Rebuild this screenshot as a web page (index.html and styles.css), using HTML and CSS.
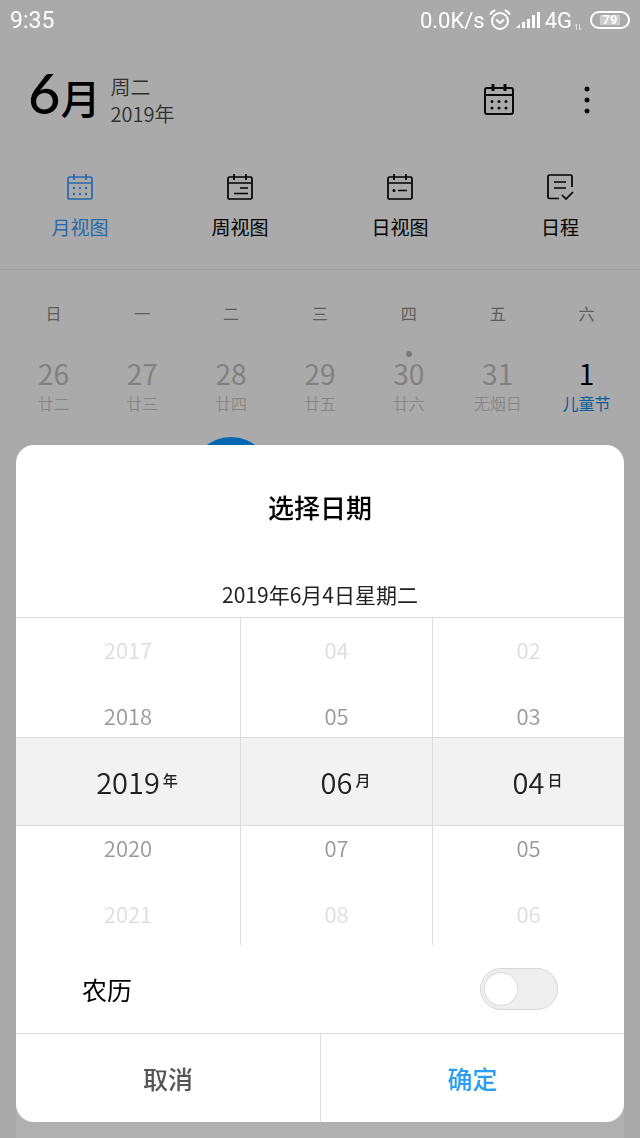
FILE: index.html
```html
<!DOCTYPE html>
<html lang="zh-CN">
<head>
  <meta charset="UTF-8">
  <meta name="viewport" content="width=device-width, initial-scale=1.0">
  <title>日历</title>
  <link rel="stylesheet" href="styles.css">
</head>
<body>
  <div class="status-bar">
    <span class="clock">9:35</span>
    <div class="status-right">
      <span>0.0K/s</span>
      <svg class="alarm" width="22" height="22" viewBox="0 0 22 22" fill="none" stroke="#fff" stroke-width="2" stroke-linecap="round">
        <circle cx="11" cy="12" r="8"/>
        <path d="M7.5 11l3.5 3 3.5-3M1.5 5Q3 2.500 5.500 1.500M20.500 5Q19 2.500 16.500 1.500"/>
      </svg>
      <svg class="signal" width="26" height="18" viewBox="0 0 26 18" fill="#fff">
        <path d="M1 17l4-4v4zM7 11h3v6H7zM12 8h3v9h-3zM17 4h3v13h-3zM22 1h3v16h-3z"/>
      </svg>
      <span>4G</span>
      <svg class="data" width="8" height="8" viewBox="0 0 8 8" fill="none" stroke="#ddd">
        <path d="M2.500 7V1L.5 3M5.500 1v6l2-2"/>
      </svg>
      <span class="battery"><span class="level">79</span></span>
    </div>
  </div>

  <div class="app">
    <header>
      <h1><span class="month-number">6</span>月</h1>
      <div class="sub-date">
        <span>周二</span>
        <span>2019年</span>
      </div>
      <button class="icon-button" aria-label="今天">
        <svg width="32" height="34" viewBox="0 0 32 34" fill="none" stroke="currentColor" stroke-width="2">
          <rect x="2" y="5" width="28" height="26" rx="2"/>
          <path d="M2 12h28"/>
          <path d="M10 1v7M22 1v7" stroke-width="3"/>
          <path d="M9 18.500h0M16 18.500h0M23 18.500h0M9 25h0M16 25h0M23 25h0" stroke-width="3" stroke-linecap="round"/>
        </svg>
      </button>
      <button class="icon-button" aria-label="更多">
        <svg width="32" height="34" viewBox="0 0 32 34" fill="currentColor">
          <circle cx="16" cy="6" r="2.500"/>
          <circle cx="16" cy="17" r="2.500"/>
          <circle cx="16" cy="28" r="2.500"/>
        </svg>
      </button>
    </header>

    <nav>
      <a href="#month" class="active">
        <svg width="28" height="28" viewBox="0 0 28 28" fill="none" stroke="currentColor" stroke-width="1.700">
          <rect x="2" y="4" width="24" height="22" rx="1.500"/>
          <path d="M2 10h24M8 1v6M20 1v6"/>
          <path d="M8 15h0M14 15h0M20 15h0M8 21h0M14 21h0M20 21h0" stroke-width="2.500" stroke-linecap="round"/>
        </svg>
        月视图
      </a>
      <a href="#week">
        <svg width="28" height="28" viewBox="0 0 28 28" fill="none" stroke="currentColor" stroke-width="1.700">
          <rect x="2" y="4" width="24" height="22" rx="1.500"/>
          <path d="M2 10h24M8 1v6M20 1v6M14 15h8M8 20.500h14"/>
        </svg>
        周视图
      </a>
      <a href="#day">
        <svg width="28" height="28" viewBox="0 0 28 28" fill="none" stroke="currentColor" stroke-width="1.700">
          <rect x="2" y="4" width="24" height="22" rx="1.500"/>
          <path d="M2 10h24M8 1v6M20 1v6M12 17.500h9"/>
          <path d="M8 17.500h0" stroke-width="3" stroke-linecap="round"/>
        </svg>
        日视图
      </a>
      <a href="#agenda">
        <svg width="28" height="28" viewBox="0 0 28 28" fill="none" stroke="currentColor" stroke-width="1.700">
          <path d="M13 25.500H3.500Q2 25.500 2 24V3.500Q2 2 3.500 2h21Q26 2 26 3.500V14M8 9h12M8 15h12M16 22l4 4 7-7"/>
        </svg>
        日程
      </a>
    </nav>

    <table class="calendar">
      <thead>
        <tr><th>日</th><th>一</th><th>二</th><th>三</th><th>四</th><th>五</th><th>六</th></tr>
      </thead>
      <tbody>
        <tr>
          <td>26<small>廿二</small></td>
          <td>27<small>廿三</small></td>
          <td>28<small>廿四</small></td>
          <td>29<small>廿五</small></td>
          <td class="event">30<small>廿六</small></td>
          <td>31<small>无烟日</small></td>
          <td class="current">1<small>儿童节</small></td>
        </tr>
        <tr>
          <td></td>
          <td></td>
          <td><div class="today"></div></td>
          <td></td>
          <td></td>
          <td></td>
          <td></td>
        </tr>
      </tbody>
    </table>
    <div class="card"></div>
  </div>

  <div class="overlay">
    <form class="dialog" role="dialog" aria-labelledby="dialogTitle">
      <h2 id="dialogTitle">选择日期</h2>
      <p class="full-date">2019年6月4日星期二</p>

      <div class="picker">
        <ul class="wheel" role="listbox" aria-label="年">
          <li class="far" role="option">2017</li>
          <li role="option">2018</li>
          <li class="selected" role="option" aria-selected="true"><span>2019<sup>年</sup></span></li>
          <li role="option">2020</li>
          <li class="far" role="option">2021</li>
        </ul>
        <ul class="wheel" role="listbox" aria-label="月">
          <li class="far" role="option">04</li>
          <li role="option">05</li>
          <li class="selected" role="option" aria-selected="true"><span>06<sup>月</sup></span></li>
          <li role="option">07</li>
          <li class="far" role="option">08</li>
        </ul>
        <ul class="wheel" role="listbox" aria-label="日">
          <li class="far" role="option">02</li>
          <li role="option">03</li>
          <li class="selected" role="option" aria-selected="true"><span>04<sup>日</sup></span></li>
          <li role="option">05</li>
          <li class="far" role="option">06</li>
        </ul>
      </div>

      <div class="lunar">
        <label for="lunar">农历</label>
        <input type="checkbox" id="lunar" class="switch">
      </div>

      <div class="actions">
        <button type="button">取消</button>
        <button type="button" class="confirm">确定</button>
      </div>
    </form>
  </div>
</body>
</html>
```
FILE: styles.css
```css
*,
*::before {
  box-sizing: border-box;
}
body {
  margin: 0;
  font-family: "Noto Sans CJK SC", sans-serif;
  background: #f7f7f7;
  color: #000;
}
button {
  font-family: inherit;
  border: none;
  background: none;
  padding: 0;
}

/* status bar stays above the dimmed page */
.status-bar {
  position: relative;
  z-index: 3;
  display: flex;
  justify-content: space-between;
  align-items: center;
  height: 40px;
  padding: 0 10px;
  color: #fff;
  font-family: Roboto, sans-serif;
  font-size: 22px;
}
.clock {
  font-size: 23px;
}
.status-right {
  display: flex;
  align-items: center;
  gap: 4px;
}
.data {
  align-self: flex-end;
  margin: 0 4px 2px -2px;
}
.battery {
  display: flex;
  width: 40px;
  height: 18px;
  padding: 2px 8px;
  border: 2px solid #fff;
  border-radius: 9px;
}
.level {
  flex: 1;
  background: #ccc;
  font-size: 13px;
  font-weight: bold;
  line-height: 10px;
  text-align: center;
}

.app {
  display: flex;
  flex-direction: column;
  min-height: calc(100vh - 40px);
}
header {
  display: flex;
  align-items: center;
  height: 120px;
  padding: 0 37px 0 28px;
}
h1 {
  margin: 0 0 10px;
  font-size: 40px;
  font-weight: 500;
  line-height: 64px;
}
.month-number {
  font-family: Lato, sans-serif;
  font-size: 56px;
}
.sub-date {
  display: flex;
  flex-direction: column;
  margin: 0 auto 0 10px;
  color: #444;
  font-size: 20px;
  font-weight: 350;
  line-height: 27px;
}
.icon-button {
  display: flex;
  margin-left: 56px;
  color: #111;
}

nav {
  display: grid;
  grid-template-columns: repeat(4, 1fr);
  height: 110px;
  padding-top: 13px;
  border-bottom: 1px solid #e6e6e6;
}
nav a {
  display: flex;
  flex-direction: column;
  align-items: center;
  gap: 12px;
  color: #000;
  font-size: 19px;
  line-height: 28px;
  text-decoration: none;
}
nav a.active {
  color: #3a98f8;
}

.calendar {
  width: calc(100% - 18px);
  margin: 0 9px;
  table-layout: fixed;
  border-collapse: collapse;
  text-align: center;
}
.calendar th {
  height: 85px;
  padding: 0;
  color: #888;
  font-size: 16px;
  font-weight: 400;
}
.calendar td {
  position: relative;
  height: 82px;
  padding: 0;
  color: #bbb;
  font-size: 28px;
  font-weight: 400;
  line-height: 36px;
  vertical-align: top;
}
.calendar small {
  display: block;
  color: #c4c4c4;
  font-size: 16px;
  font-weight: 350;
  line-height: 24px;
}
.calendar .current {
  color: #000;
}
.calendar .current small {
  color: #0c88e0;
  font-weight: 400;
}
.event::before {
  content: "";
  position: absolute;
  top: -4px;
  left: calc(50% - 3px);
  width: 6px;
  height: 6px;
  border-radius: 50%;
  background: #b4b4b4;
}
.today {
  width: 80px;
  height: 80px;
  margin: 0 auto;
  border-radius: 50%;
  background: #0095ff;
}
.card {
  flex: 1;
  margin: 0 16px;
  background: #fff;
}

.overlay {
  position: fixed;
  inset: 0;
  z-index: 2;
  display: flex;
  align-items: flex-end;
  padding: 16px;
  background: rgba(0, 0, 0, 0.31);
}
.dialog {
  flex: 1;
  overflow: hidden;
  border-radius: 18px;
  background: #fff;
}
.dialog h2 {
  margin: 0;
  padding: 42px 0 51px;
  font-size: 26px;
  font-weight: 500;
  line-height: 40px;
  text-align: center;
}
.full-date {
  margin: 0;
  padding-bottom: 7px;
  color: #222;
  font-size: 21px;
  line-height: 32px;
  text-align: center;
}

.picker {
  position: relative;
  display: grid;
  grid-template-columns: 7fr 6fr 6fr;
  height: 328px;
  overflow: hidden;
  border-top: 1px solid #ddd;
}
/* highlighted band behind the selected row */
.picker::before {
  content: "";
  position: absolute;
  top: 119px;
  left: 0;
  right: 0;
  height: 89px;
  border: solid #ddd;
  border-width: 1px 0;
  background: #f2f2f2;
}
.wheel {
  position: relative;
  margin: -2px 0 0;
  padding: 0;
  list-style: none;
  text-align: center;
}
.wheel + .wheel {
  border-left: 1px solid #ddd;
}
.wheel li {
  height: 66px;
  color: #999;
  font-size: 22px;
  font-weight: 350;
  line-height: 66px;
}
.wheel .far {
  color: #ddd;
}
.wheel .selected {
  color: #222;
  font-size: 29px;
}
.selected span {
  position: relative;
}
.selected sup {
  position: absolute;
  top: 10px;
  left: calc(100% + 3px);
  font-size: 15px;
  font-weight: 500;
  line-height: 20px;
}

.lunar {
  display: flex;
  justify-content: space-between;
  align-items: center;
  height: 88px;
  padding: 0 66px;
  font-size: 25px;
}
.switch {
  appearance: none;
  width: 78px;
  height: 42px;
  margin: 0;
  padding: 4px;
  border: 1px solid #d8d8d8;
  border-radius: 21px;
  background: #eee;
}
.switch::before {
  content: "";
  display: block;
  width: 32px;
  height: 32px;
  border-radius: 50%;
  background: #fff;
  box-shadow: 0 0 0 1px #ddd;
}
.switch:checked {
  background: #2c9df0;
}
.switch:checked::before {
  margin-left: auto;
}

.actions {
  display: grid;
  grid-template-columns: 1fr 1fr;
  border-top: 1px solid #ddd;
}
.actions button {
  height: 88px;
  color: #555;
  font-size: 25px;
  font-weight: 500;
}
.actions .confirm {
  border-left: 1px solid #ddd;
  color: #2c9df0;
}
```
